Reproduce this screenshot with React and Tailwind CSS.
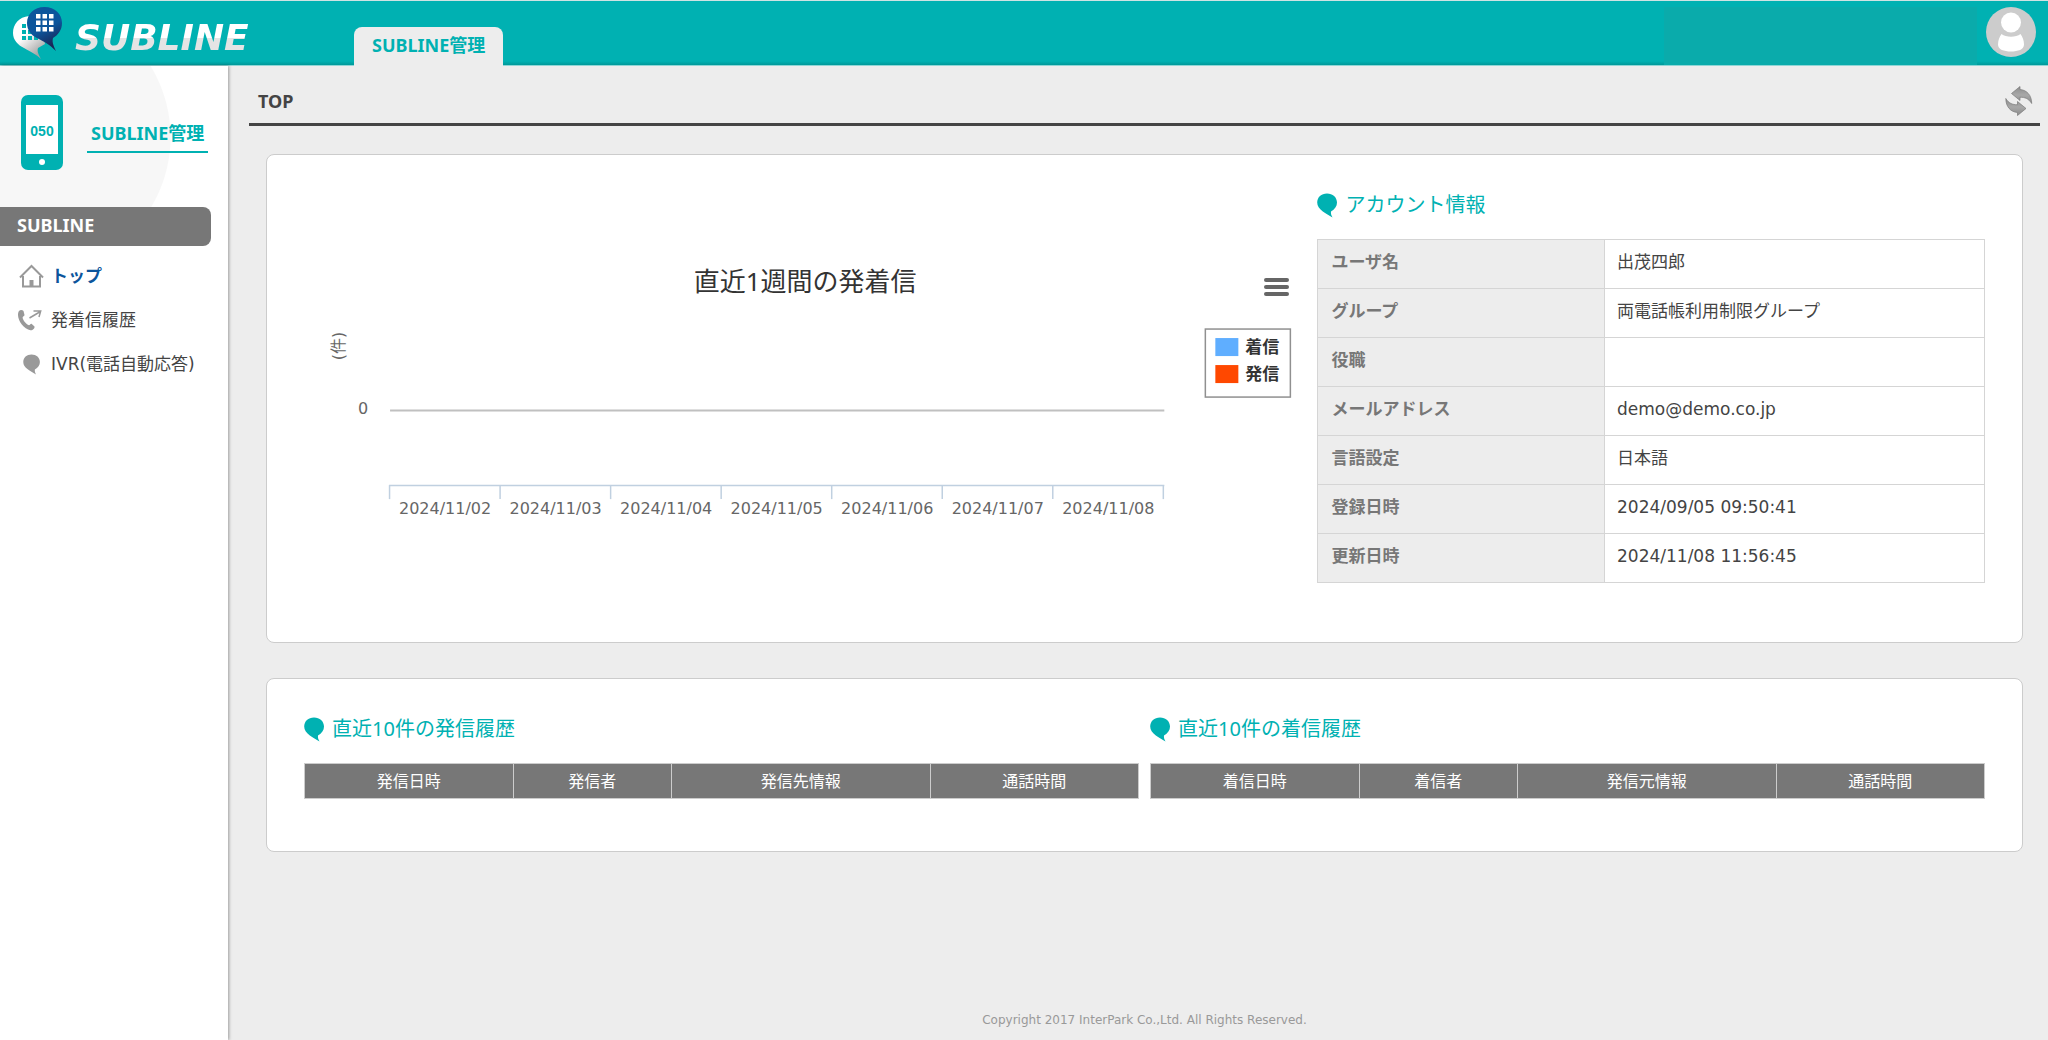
const DATES = ["2024/11/02", "2024/11/03", "2024/11/04", "2024/11/05", "2024/11/06", "2024/11/07", "2024/11/08"];

const ACCOUNT = [
  ["ユーザ名", "出茂四郎"],
  ["グループ", "両電話帳利用制限グループ"],
  ["役職", ""],
  ["メールアドレス", "demo@demo.co.jp"],
  ["言語設定", "日本語"],
  ["登録日時", "2024/09/05 09:50:41"],
  ["更新日時", "2024/11/08 11:56:45"],
];

function Balloon({ className }) {
  return (
    <svg viewBox="0 0 20 25" className={className} fill="currentColor" aria-hidden="true">
      <path d="M10 0.500C4.300 0.500 0.200 4.200 0.200 9.600C0.200 13.300 2.300 16 5.500 18.200C9 20.600 12 22.300 15.500 24.500C14.200 22.300 13.700 20.600 14 18.600C17.800 16.300 20 13.300 20 9.600C20 4.200 15.700 0.500 10 0.500Z" />
    </svg>
  );
}

function LogoMark() {
  const cells = [0, 1, 2];
  return (
    <svg viewBox="0 0 50 54" className="h-[54px] w-[50px]" aria-hidden="true">
      <defs>
        <linearGradient id="backBalloon" x1="0" y1="0" x2="0.6" y2="1">
          <stop offset="0.5" stopColor="#fff" />
          <stop offset="1" stopColor="#a5a5a5" />
        </linearGradient>
        <linearGradient id="frontBalloon" x1="0" y1="0" x2="0.4" y2="1">
          <stop offset="0.6" stopColor="#0c559c" />
          <stop offset="1" stopColor="#1a2656" />
        </linearGradient>
      </defs>
      <path fill="url(#backBalloon)" d="M16 10C6 11 0 18 0 27C0 34 5 39 11 42C18 46 23 48 28 53C25 48 24 45 25 42L32 38L26 12Z" />
      <g fill="#00b1b2">
        {cells.map((r) => cells.map((c) => <rect key={`${r}${c}`} x={9 + c * 6} y={18 + r * 6} width="4" height="4" />))}
      </g>
      <path fill="url(#frontBalloon)" d="M31.500 1C21 1 14 8 14 17C14 24 18 29 24 32C32 36 37 39 43 45C40 39 39 36 40 32C45 29 49 24 49 17C49 8 42 1 31.500 1Z" />
      <g fill="#fff">
        {cells.map((r) => cells.map((c) => <rect key={`${r}${c}`} x={23 + c * 6.500} y={8 + r * 6.500} width="4.500" height="4.500" />))}
      </g>
    </svg>
  );
}

function Phone() {
  return (
    <svg viewBox="0 0 42 75" className="h-[75px] w-[42px] shrink-0" aria-hidden="true">
      <rect width="42" height="75" rx="7" fill="#00b1b2" />
      <rect x="5" y="10" width="32" height="49" fill="#fff" />
      <circle cx="21" cy="67" r="3" fill="#fff" />
      <text x="21" y="41" textAnchor="middle" fontSize="14" fontWeight="700" fill="#00b1b2" fontFamily="Liberation Sans">050</text>
    </svg>
  );
}

function HomeIcon() {
  return (
    <svg viewBox="0 0 26 24" className="h-6 w-[26px]" fill="none" stroke="#999" strokeWidth="2" aria-hidden="true">
      <path d="M1 13.500L12.500 2L24 13.500" />
      <path d="M4 12V22.500H21V12" />
      <rect x="10.500" y="16" width="4" height="6" fill="#999" stroke="none" />
    </svg>
  );
}

function CallIcon() {
  return (
    <svg viewBox="0 0 24 22" className="h-[22px] w-6" aria-hidden="true">
      <path fill="#999" d="M1 2C2 0.500 4.500 0.500 5.500 2L6.500 6C6.500 7.200 4.800 7.500 4.600 8.500C5 11.500 8 15 11 16.200C12 16.200 12.300 14.500 13.500 14.700L16.500 17.500C17 19.500 14.500 21.500 12.500 21.200C6 20 0 12 0 6C0 4 0.300 3 1 2Z" />
      <path fill="none" stroke="#999" strokeWidth="1.500" d="M11.500 9L22.500 2.500M15.500 2H22.700L21 8" />
    </svg>
  );
}

function RefreshIcon() {
  return (
    <svg viewBox="0 0 28 32" className="h-8 w-7" aria-hidden="true">
      <defs>
        <linearGradient id="arrowFill" x1="0" y1="0" x2="0" y2="1">
          <stop offset="0" stopColor="#8c8c8c" />
          <stop offset="0.5" stopColor="#a8a8a8" />
          <stop offset="1" stopColor="#8c8c8c" />
        </linearGradient>
      </defs>
      <g fill="url(#arrowFill)" stroke="#7a7a7a" strokeWidth="0.700">
        <path d="M6.500 8.500L15 1.500V4.500C22 5 26.700 10.500 26.700 18.500C23.500 13.500 20 12.200 15 12.300V15.500Z" />
        <path d="M21 23.500L12.500 30.500V27.500C5.500 27 0.800 21.500 0.800 13.500C4 18.500 7.500 19.800 12.500 19.700V16.500Z" />
      </g>
    </svg>
  );
}

function SectionTitle({ children }) {
  return (
    <h2 className="flex items-center gap-2 text-xl leading-7 text-[#00b1b2]">
      <Balloon className="h-[25px] w-5" />
      {children}
    </h2>
  );
}

function Chart() {
  return (
    <div className="relative">
      <svg viewBox="0 7 1001 394" className="w-full" fontFamily='"DejaVu Sans","Noto Sans CJK JP",sans-serif' role="img" aria-label="直近1週間の発着信">
        <text x="501" y="107" textAnchor="middle" fontSize="26" fill="#333" fontFamily='"Noto Sans","Noto Sans CJK JP",sans-serif'>直近1週間の発着信</text>
        <text transform="translate(40 162) rotate(-90)" textAnchor="middle" fontSize="16" fill="#666">(件)</text>
        <text x="59" y="230" textAnchor="middle" fontSize="16" fill="#666">0</text>
        <path d="M86 226.500H860" stroke="#c0c0c0" strokeWidth="2" />
        <path d="M85 301.500H860" stroke="#c0d0e0" strokeWidth="1.500" />
        {[0, 1, 2, 3, 4, 5, 6, 7].map((i) => (
          <path key={i} d={`M${85.500 + i * 110.500} 301V315`} stroke="#c0d0e0" strokeWidth="1.500" />
        ))}
        {DATES.map((d, i) => (
          <text key={d} x={141 + i * 110.500} y="330" textAnchor="middle" fontSize="16" fill="#666">{d}</text>
        ))}
        <rect x="901" y="145" width="85" height="68" fill="#fff" stroke="#909090" strokeWidth="1.500" />
        <rect x="911" y="154" width="23" height="18" fill="#5faeff" />
        <rect x="911" y="181" width="23" height="18" fill="#ff4800" />
        <text x="941" y="169" fontSize="17" fontWeight="700" fill="#333">着信</text>
        <text x="941" y="196" fontSize="17" fontWeight="700" fill="#333">発信</text>
      </svg>
      <button type="button" aria-label="チャートメニュー" className="absolute top-[87px] right-4 flex w-[25px] flex-col gap-[3px]">
        <span className="h-1 w-full rounded-full bg-[#666]" />
        <span className="h-1 w-full rounded-full bg-[#666]" />
        <span className="h-1 w-full rounded-full bg-[#666]" />
      </button>
    </div>
  );
}

function HistoryTable({ title, columns }) {
  return (
    <section>
      <SectionTitle>{title}</SectionTitle>
      <table className="mt-5 w-full table-fixed border-collapse text-base leading-[34px] text-white">
        <colgroup>
          <col className="w-[25%]" />
          <col className="w-[19%]" />
          <col />
          <col className="w-[25%]" />
        </colgroup>
        <thead>
          <tr>
            {columns.map((c) => (
              <th key={c} scope="col" className="border border-[#ccc] bg-[#777] p-0 font-normal">{c}</th>
            ))}
          </tr>
        </thead>
      </table>
    </section>
  );
}

export default function App() {
  return (
    <div className='flex min-h-screen flex-col bg-[#ededed] font-["Noto_Sans","Noto_Sans_CJK_JP",sans-serif] text-lg text-[#444]'>
      <header className="flex h-[66px] items-stretch border-t border-b border-t-[#cfe3e3] border-b-[#8fd6d6] bg-[linear-gradient(to_bottom,#00b1b2_94%,#009899)]">
        <a href="#" className="flex w-[354px] items-start pt-[5px] pl-[13px]" aria-label="SUBLINE">
          <LogoMark />
          <span className='mt-3 ml-3 bg-linear-to-b from-white from-50% to-[#e4e4e4] to-50% bg-clip-text pr-1 font-["DejaVu_Sans",sans-serif] text-4xl leading-10 font-bold text-transparent italic'>SUBLINE</span>
        </a>
        <a href="#" className="z-10 mt-[26px] -mb-px rounded-t-lg bg-[#ededed] px-[18px] pt-1 text-lg leading-7 font-bold text-[#00b1b2]">SUBLINE管理</a>
        <div className="mt-[6px] ml-auto w-[313px] bg-[#0aabab]" />
        <button type="button" aria-label="ユーザーメニュー" className="mt-[6px] mr-3 ml-[9px] h-[50px] w-[50px]">
          <svg viewBox="0 0 50 50" aria-hidden="true">
            <circle cx="25" cy="25" r="25" fill="#ccc" />
            <circle cx="25" cy="15.500" r="10" fill="#fff" />
            <path fill="#fff" d="M15.500 27C20 30.500 30 30.500 34.500 27C36.500 29.500 38 33.500 38 37.500C38 42.500 32 44.500 25 44.500C18 44.500 12 42.500 12 37.500C12 33.500 13.500 29.500 15.500 27Z" />
          </svg>
        </button>
      </header>

      <div className="flex grow">
        <aside className="w-[228px] shrink-0 bg-white shadow-[1px_0_3px_rgba(0,0,0,0.35)]">
          <div className="flex h-[141px] items-start gap-6 bg-[radial-gradient(circle_at_34px_71px,#f7f7f7_136px,#fff_137px)] pt-[29px] pl-[21px]">
            <Phone />
            <a href="#" className="mt-6 border-b-2 border-[#00b1b2] px-1 pb-1 text-lg leading-7 font-bold text-[#00b1b2]">SUBLINE管理</a>
          </div>
          <h2 className="mr-[17px] rounded-r-lg bg-[#777] pt-1 pb-[7px] pl-[17px] text-lg leading-7 font-bold text-white">SUBLINE</h2>
          <nav className='mt-2 font-["DejaVu_Sans","Noto_Sans_CJK_JP",sans-serif] text-[17px] leading-[44px]'>
            <a href="#" className="flex items-center font-bold text-[#0c559c]">
              <span className="flex w-[51px] justify-center pl-3"><HomeIcon /></span>トップ
            </a>
            <a href="#" className="flex items-center">
              <span className="flex w-[51px] justify-center pl-2"><CallIcon /></span>発着信履歴
            </a>
            <a href="#" className="flex items-center">
              <span className="flex w-[51px] justify-center pl-3 text-[#999]"><Balloon className="h-[21px] w-[17px]" /></span>IVR(電話自動応答)
            </a>
          </nav>
        </aside>

        <main className="flex grow flex-col pr-2 pl-[21px]">
          <div className="flex h-[60px] items-center justify-between border-b-3 border-[#444] pt-3 pr-[7px] pl-[9px]">
            <h1 className="text-lg font-bold">TOP</h1>
            <button type="button" aria-label="更新"><RefreshIcon /></button>
          </div>

          <div className="mt-7 flex flex-col gap-[35px] px-[17px]">
            <section className="grid grid-cols-[3fr_2fr] gap-x-3 rounded-lg border border-[#ccc] bg-white px-[37px] pt-9 pb-[57px]">
              <Chart />
              <div>
                <SectionTitle>アカウント情報</SectionTitle>
                <table className="mt-5 w-full border-collapse text-[17px] leading-6">
                  <tbody>
                    {ACCOUNT.map(([k, v]) => (
                      <tr key={k} className="h-[49px]">
                        <th scope="row" className="w-[43%] border border-[#d5d5d5] bg-[#ededed] px-[13px] pb-1 text-left font-bold text-[#777]">{k}</th>
                        <td className='border border-[#d5d5d5] px-3 pb-1 font-["DejaVu_Sans","Noto_Sans_CJK_JP",sans-serif]'>{v}</td>
                      </tr>
                    ))}
                  </tbody>
                </table>
              </div>
            </section>

            <section className="grid grid-cols-2 gap-x-[11px] rounded-lg border border-[#ccc] bg-white px-[37px] pt-9 pb-[52px]">
              <HistoryTable title="直近10件の発信履歴" columns={["発信日時", "発信者", "発信先情報", "通話時間"]} />
              <HistoryTable title="直近10件の着信履歴" columns={["着信日時", "着信者", "発信元情報", "通話時間"]} />
            </section>
          </div>

          <footer className='mt-auto pb-2 text-center font-["DejaVu_Sans",sans-serif] text-xs leading-6 text-[#999]'>Copyright 2017 InterPark Co.,Ltd. All Rights Reserved.</footer>
        </main>
      </div>
    </div>
  );
}
